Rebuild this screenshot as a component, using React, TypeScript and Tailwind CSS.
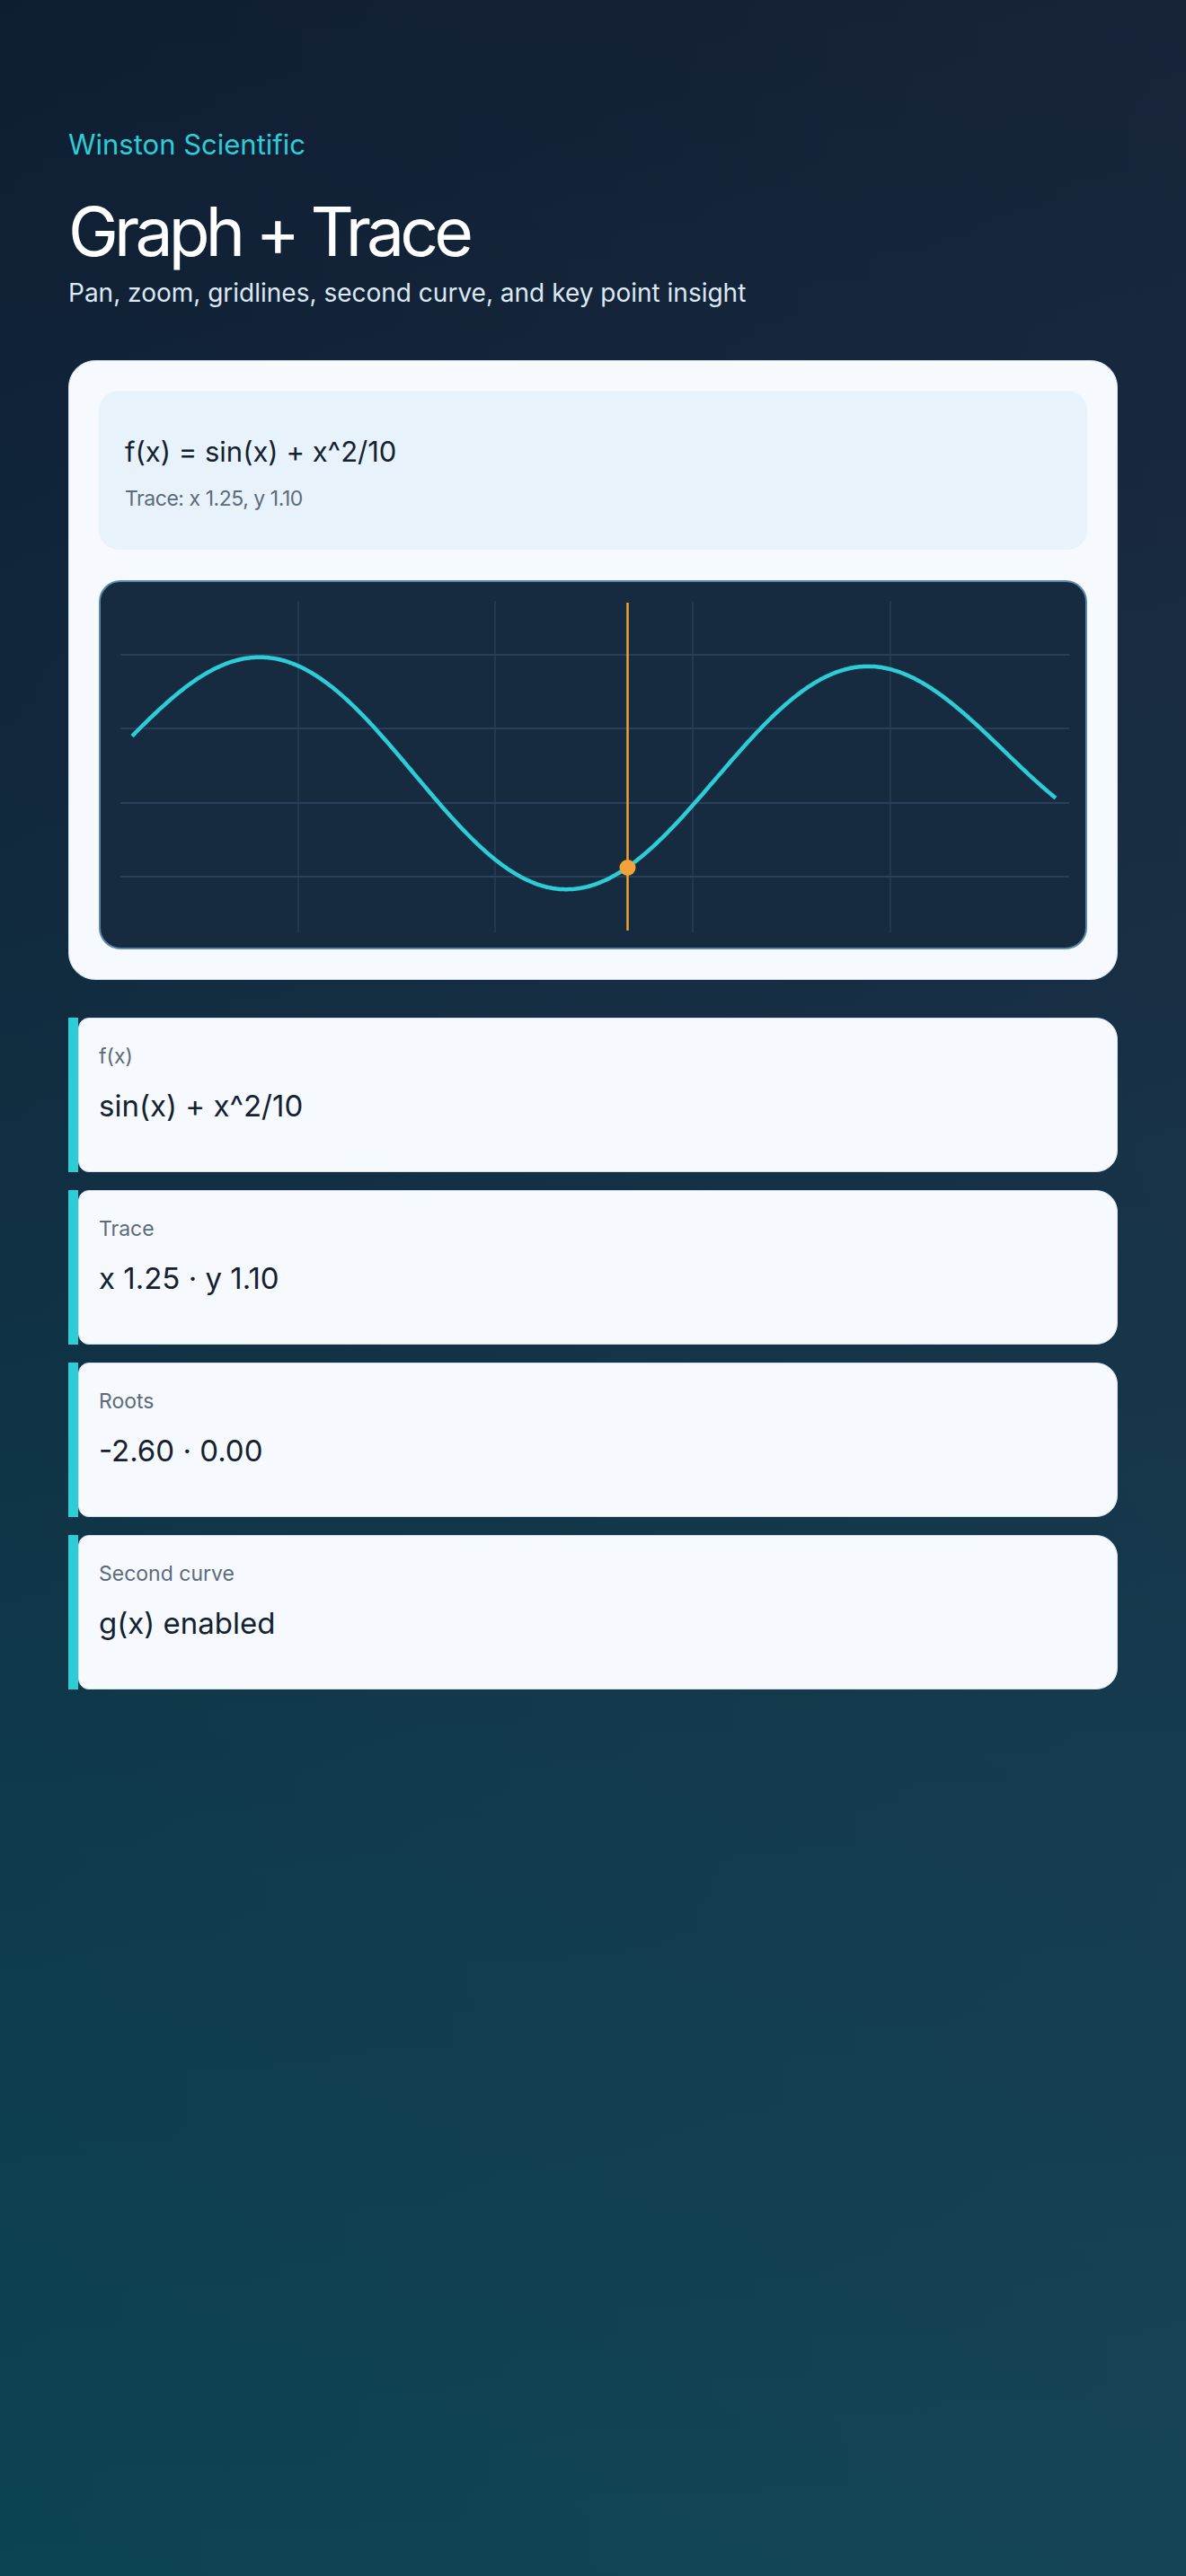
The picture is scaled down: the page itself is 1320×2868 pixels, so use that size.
import React from "react";

function curvePath(ox: number, oy: number): string {
  const P = 664;
  const A = 120.8;
  const C = 866.9;
  const Q = 1.046e-4;
  const M = 700;
  const pts: string[] = [];
  for (let x = 146; x <= 1174.5; x += 2) {
    let y = C - A * Math.cos((2 * Math.PI * (x - 296)) / P) - Q * (x - M) * (x - M);
    if (x > 1000) y -= 3.6e-4 * (x - 1000) * (x - 1000);
    pts.push(`${pts.length === 0 ? "M" : "L"}${(x - ox).toFixed(1)},${(y - oy).toFixed(1)}`);
  }
  return pts.join(" ");
}

const stats = [
  { label: "f(x)", value: "sin(x) + x^2/10" },
  { label: "Trace", value: "x 1.25 · y 1.10" },
  { label: "Roots", value: "-2.60 · 0.00" },
  { label: "Second curve", value: "g(x) enabled" },
];

function Graph() {
  const ox = 111;
  const oy = 645;
  const vx = [331, 550, 770, 990];
  const hy = [726, 808, 891, 973];
  return (
    <div className="h-[411px] rounded-[24px] border-2 border-[#5a8aa8] bg-[#172b40] overflow-hidden">
      <svg width="1100" height="411" viewBox="0 0 1100 411" className="block">
        {vx.map((x) => (
          <line key={"v" + x} x1={x - ox} x2={x - ox} y1={666 - oy} y2={1035 - oy} stroke="#2e4760" strokeWidth="1" />
        ))}
        {hy.map((y) => (
          <line key={"h" + y} x1={133 - ox} x2={1189 - ox} y1={y - oy} y2={y - oy} stroke="#2e4760" strokeWidth="1.5" />
        ))}
        <path d={curvePath(ox, oy)} fill="none" stroke="#2ccdd6" strokeWidth="4.5" strokeLinejoin="round" />
        <line x1={697.5 - ox} x2={697.5 - ox} y1={668 - oy} y2={1033 - oy} stroke="#f2a23a" strokeWidth="2.5" />
        <circle cx={697.5 - ox} cy={963 - oy} r="9" fill="#f2a23a" />
      </svg>
    </div>
  );
}

export default function App() {
  return (
    <div className="min-h-[2868px] w-full bg-[linear-gradient(90deg,rgba(70,70,100,0)_0%,rgba(70,70,100,0.14)_100%),linear-gradient(180deg,#0f1d32_0%,#112a3e_35%,#0e3a4b_70%,#0c4453_100%)] px-[76px] pt-[141px] font-['Inter',sans-serif]">
      <p className="text-[31px] leading-[40px] text-[#2ccdd6]">Winston Scientific</p>
      <h1 className="mt-[37px] text-[75px] leading-[80px] tracking-[-0.065em] text-white">Graph + Trace</h1>
      <p className="mt-[10px] text-[28px] leading-[36px] text-[#dce8f4]">Pan, zoom, gridlines, second curve, and key point insight</p>

      <div className="mt-[57px] rounded-[30px] border border-[#d2deea] bg-[#f6faff] p-[33px] flex flex-col gap-[34px]">
        <div className="h-[177px] rounded-[22px] bg-[#e8f2fb] px-[29px] pt-[48px]">
          <p className="text-[31px] leading-[40px] text-[#142130]">f(x) = sin(x) + x^2/10</p>
          <p className="mt-[17px] text-[23px] leading-[30px] tracking-[-0.02em] text-[#5c6b7b]">Trace: x 1.25, y 1.10</p>
        </div>
        <Graph />
      </div>

      <div className="mt-[42px] flex flex-col gap-[20px]">
        {stats.map((s) => (
          <div key={s.label} className="flex h-[172px]">
            <div className="w-[11px] bg-[#2ccdd6]" />
            <div className="flex-1 rounded-l-[12px] rounded-r-[24px] border border-[#d2deea] bg-[#f6faff] pl-[22px] pt-[26px]">
              <p className="text-[23px] leading-[32px] text-[#5c6b7b]">{s.label}</p>
              <p className="mt-[17px] text-[33px] leading-[44px] text-[#142130]">{s.value}</p>
            </div>
          </div>
        ))}
      </div>
    </div>
  );
}
